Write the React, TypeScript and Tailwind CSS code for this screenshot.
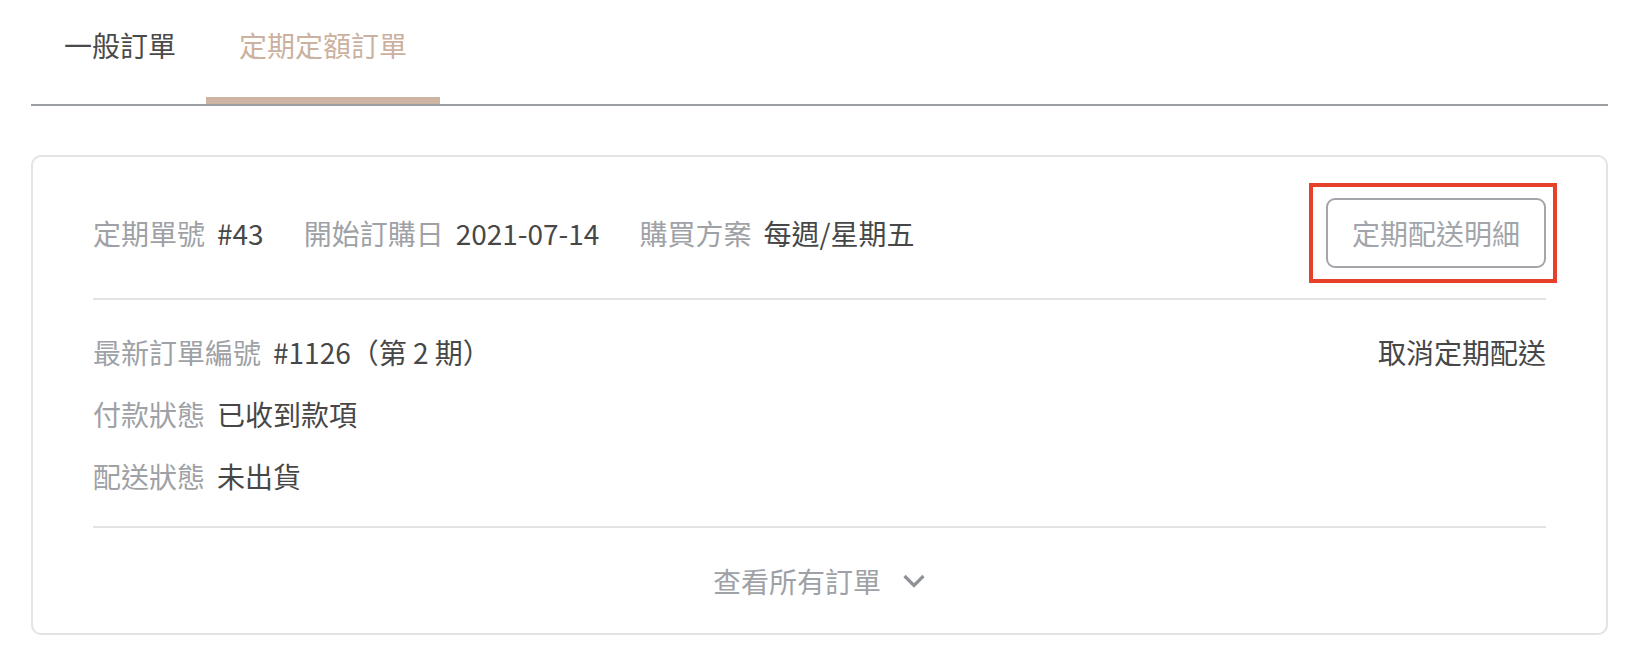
import React from 'react';

type Field = { label: string; value: string };

const headerFields: Field[] = [
  { label: '定期單號', value: '#43' },
  { label: '開始訂購日', value: '2021-07-14' },
  { label: '購買方案', value: '每週/星期五' },
];

const statusFields: Field[] = [
  { label: '最新訂單編號', value: '#1126（第 2 期）' },
  { label: '付款狀態', value: '已收到款項' },
  { label: '配送狀態', value: '未出貨' },
];

function InfoItem({ label, value }: Field) {
  return (
    <div className="flex items-center">
      <span className="text-[#9ea1a6]">{label}</span>
      <span className="ml-[12px] text-[#474747]">{value}</span>
    </div>
  );
}

export default function App() {
  return (
    <div className="w-[1632px] h-[658px] bg-white pl-[31px] pr-[24px] font-['Noto_Sans_CJK_TC','Noto_Sans',sans-serif] text-[28px] leading-[40px]">
      {/* Tabs */}
      <div className="flex border-b-2 border-[#9b9ea2]">
        <button className="h-[104px] pl-[33px] pr-[30px] pt-[25px] flex items-start text-[#4a4a4a] border-b-[7px] border-transparent">
          一般訂單
        </button>
        <button className="h-[104px] px-[33px] pt-[25px] flex items-start text-[#cbb19f] border-b-[7px] border-[#cdb4a3]">
          定期定額訂單
        </button>
      </div>

      {/* Subscription card */}
      <div className="mt-[49px] border-2 border-[#e3e3e3] rounded-[10px] px-[60px]">
        <div className="flex items-center justify-between pt-[41px] pb-[30px] border-b-2 border-[#e3e3e3]">
          <div className="flex items-center gap-[40px]">
            {headerFields.map((f) => (
              <InfoItem key={f.label} {...f} />
            ))}
          </div>
          <div className="relative">
            <button className="w-[220px] h-[70px] border-2 border-[#a2a5aa] rounded-[9px] text-[#a2a5aa] flex items-center justify-center">
              定期配送明細
            </button>
            <div className="absolute -left-[17px] -right-[11px] -top-[15px] -bottom-[15px] border-[4px] border-[#e8412b] pointer-events-none" />
          </div>
        </div>

        <div className="flex justify-between pt-[32px] pb-[30px] border-b-2 border-[#e3e3e3]">
          <div className="flex flex-col gap-[22px]">
            {statusFields.map((f) => (
              <InfoItem key={f.label} {...f} />
            ))}
          </div>
          <button className="self-start text-[#474747]">取消定期配送</button>
        </div>

        <button className="w-full h-[105px] flex items-center justify-center gap-[21px] text-[#9ea1a6]">
          <span>查看所有訂單</span>
          <svg width="24" height="16" viewBox="0 0 24 16" fill="none">
            <path d="M2.5 3 L12 12.5 L21.5 3" stroke="#8f9398" strokeWidth="3.2" />
          </svg>
        </button>
      </div>
    </div>
  );
}
